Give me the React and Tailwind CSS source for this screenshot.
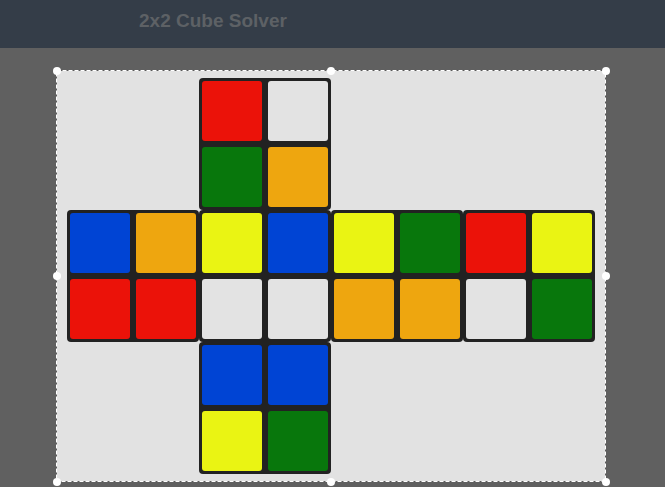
import React from "react";

const C = {
  R: "bg-[#eb1209]",
  W: "bg-[#e3e3e3]",
  G: "bg-[#08770c]",
  O: "bg-[#eea60f]",
  B: "bg-[#0044d4]",
  Y: "bg-[#eaf413]",
};

// cube net: grid position + stickers of each face
const faces = [
  { pos: "col-start-2 row-start-1", s: ["R", "W", "G", "O"] },
  { pos: "col-start-1 row-start-2", s: ["B", "O", "R", "R"] },
  { pos: "col-start-2 row-start-2", s: ["Y", "B", "W", "W"] },
  { pos: "col-start-3 row-start-2", s: ["Y", "G", "O", "O"] },
  { pos: "col-start-4 row-start-2", s: ["R", "Y", "W", "G"] },
  { pos: "col-start-2 row-start-3", s: ["B", "B", "Y", "G"] },
];

const Face = ({ pos, s }) => (
  <div className={`${pos} grid grid-cols-2 gap-[6px] rounded-[4px] bg-[#222222] p-[3px]`}>
    {s.map((c, i) => (
      <div key={i} className={`h-[60px] w-[60px] rounded-[3px] ${C[c]}`} />
    ))}
  </div>
);

const Handle = () => <span className="h-[8px] w-[8px] rounded-full bg-white" />;

export default function App() {
  return (
    <div className="flex h-[487px] w-[665px] flex-col overflow-hidden bg-[#606060]">
      <header className="h-12 shrink-0 bg-[#343d48] pl-[139px] pt-[9px]">
        <h1
          className="text-[19px] font-bold leading-[24px] text-[#5d6165]"
          style={{ fontFamily: '"Liberation Sans", Arial, sans-serif' }}
        >
          2x2 Cube Solver
        </h1>
      </header>

      <main className="flex-1 pl-[56px] pt-[22px]">
        <div className="relative h-[412px] w-[550px] bg-[#e2e2e2] pl-[11px] pt-[8px]">
          <div className="grid grid-cols-[repeat(4,132px)] grid-rows-[repeat(3,132px)]">
            {faces.map((f, i) => (
              <Face key={i} {...f} />
            ))}
          </div>

          {/* selection frame */}
          <svg className="pointer-events-none absolute inset-0 h-full w-full overflow-visible">
            <rect
              x="0.5"
              y="0.5"
              width="549"
              height="411"
              fill="none"
              stroke="#5a5a5a"
              strokeWidth="1"
            />
            <rect
              x="0.5"
              y="0.5"
              width="549"
              height="411"
              fill="none"
              stroke="#ffffff"
              strokeWidth="1"
              strokeDasharray="4 2"
            />
          </svg>

          {/* resize handles */}
          <div className="pointer-events-none absolute -inset-[3.5px] flex flex-col justify-between">
            <div className="flex justify-between">
              <Handle />
              <Handle />
              <Handle />
            </div>
            <div className="flex justify-between">
              <Handle />
              <Handle />
            </div>
            <div className="flex justify-between">
              <Handle />
              <Handle />
              <Handle />
            </div>
          </div>
        </div>
      </main>
    </div>
  );
}
